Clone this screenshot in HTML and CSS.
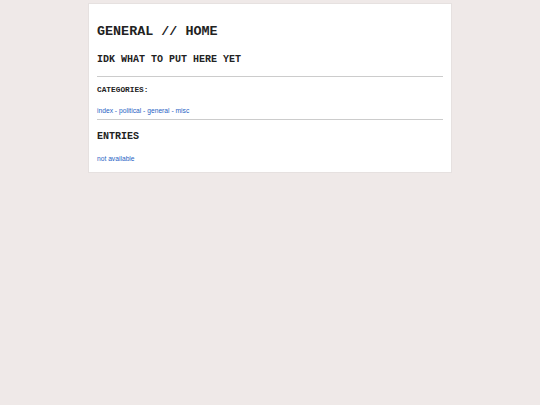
FILE: index.html
```html
<!DOCTYPE html>
<html lang="en">

<head>
    <meta charset="UTF-8">
    <meta name="viewport" content="width=device-width, initial-scale=1.0">
    <title>general // home</title>
    <link rel="stylesheet" href="styles.css">
</head>

<body>
    <div class="page">
        <h1>GENERAL // HOME</h1>
        <h2 class="tagline">IDK WHAT TO PUT HERE YET</h2>
        <hr>
        <h3>CATEGORIES:</h3>
        <p class="cats">
            <a href="#">index</a> - <a href="#">political</a> - <a href="#">general</a> - <a href="#">misc</a>
        </p>
        <hr class="sep">
        <h2 class="entries-title">ENTRIES</h2>
        <p class="entries"><a href="#">not available</a></p>
    </div>
</body>

</html>
```

FILE: styles.css
```css
:root {
    --bg: #efe9e8;
    --card: #ffffff;
    --card-border: #e6e1e0;
    --rule: #cccccc;
    --text: #222222;
    --link: #1f5fc4;
}

* {
    box-sizing: border-box;
}

body {
    margin: 0;
    padding-top: 3px;
    background: var(--bg);
    color: var(--text);
    font-family: "Courier New", "Nimbus Mono PS", "FreeMono", "Liberation Mono", monospace;
}

.page {
    width: 364px;
    margin: 0 auto;
    padding: 0 8px 9px;
    background: var(--card);
    border: 1px solid var(--card-border);
}

h1,
h2,
h3 {
    font-weight: bold;
    margin: 0;
}

h1 {
    font-size: 13.4px;
    line-height: 15px;
    margin-top: 20px;
}

h2 {
    font-size: 10px;
    line-height: 11px;
}

.tagline {
    margin-top: 15px;
}

h3 {
    font-size: 7.8px;
    line-height: 9px;
    margin-top: 9px;
}

hr {
    border: none;
    border-top: 1px solid var(--rule);
    margin: 11px 0 0;
}

hr.sep {
    margin-top: 4px;
}

p {
    margin: 0;
    font-family: "Liberation Sans", Arial, sans-serif;
    font-size: 6.7px;
    line-height: 8px;
    color: var(--link);
}

.cats {
    margin-top: 12px;
}

.entries-title {
    margin-top: 11px;
}

.entries {
    margin-top: 13px;
}

a {
    color: var(--link);
    text-decoration: none;
}
```
